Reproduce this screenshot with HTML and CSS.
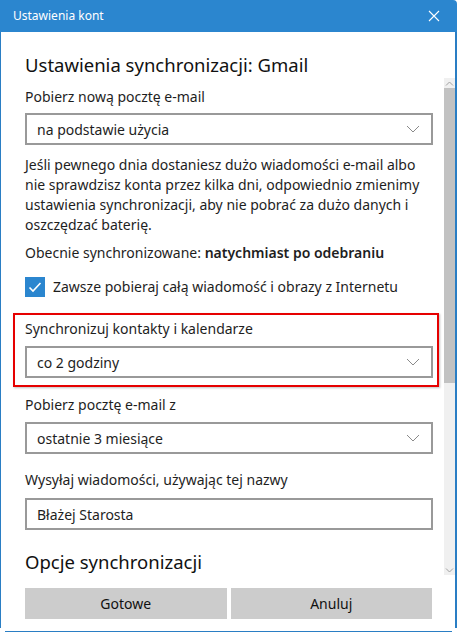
FILE: index.html
```html
<!DOCTYPE html>
<html lang="pl">
<head>
<meta charset="utf-8">
<title>Ustawienia kont</title>
<link rel="stylesheet" href="styles.css">
</head>
<body>
<div class="window">
  <div class="titlebar">
    <span class="title">Ustawienia kont</span>
    <svg class="close" width="12" height="12" viewBox="0 0 12 12"><path d="M1 1L11 11M11 1L1 11" stroke="#fff" stroke-width="1.1" fill="none"/></svg>
  </div>
  <div class="body">
    <div class="scroll">
      <h1 class="heading">Ustawienia synchronizacji: Gmail</h1>
      <div class="label">Pobierz nową pocztę e-mail</div>
      <div class="select"><span>na podstawie użycia</span><svg class="chev" width="14" height="8" viewBox="0 0 14 8"><path d="M1 1L7 7L13 1" stroke="#8a8a8a" stroke-width="1" fill="none"/></svg></div>
      <p class="desc">Jeśli pewnego dnia dostaniesz dużo wiadomości e-mail albo<br>nie sprawdzisz konta przez kilka dni, odpowiednio zmienimy<br>ustawienia synchronizacji, aby nie pobrać za dużo danych i<br>oszczędzać baterię.</p>
      <div class="current">Obecnie synchronizowane: <b>natychmiast po odebraniu</b></div>
      <div class="check-row">
        <span class="checkbox"><svg width="20" height="20" viewBox="0 0 20 20"><path d="M4.5 10.5L8 14L15.5 6" stroke="#fff" stroke-width="1.6" fill="none"/></svg></span>
        <span>Zawsze pobieraj całą wiadomość i obrazy z Internetu</span>
      </div>
      <div class="highlight">
        <div class="label">Synchronizuj kontakty i kalendarze</div>
        <div class="select"><span>co 2 godziny</span><svg class="chev" width="14" height="8" viewBox="0 0 14 8"><path d="M1 1L7 7L13 1" stroke="#8a8a8a" stroke-width="1" fill="none"/></svg></div>
      </div>
      <div class="label after-hl">Pobierz pocztę e-mail z</div>
      <div class="select"><span>ostatnie 3 miesiące</span><svg class="chev" width="14" height="8" viewBox="0 0 14 8"><path d="M1 1L7 7L13 1" stroke="#8a8a8a" stroke-width="1" fill="none"/></svg></div>
      <div class="label spaced">Wysyłaj wiadomości, używając tej nazwy</div>
      <div class="input">Błażej Starosta</div>
      <h2 class="heading sub">Opcje synchronizacji</h2>
    </div>
    <div class="scrollbar">
      <div class="arrow"><svg width="9" height="5" viewBox="0 0 9 5"><path d="M1 4.5L4.5 1L8 4.5" stroke="#a0a0a0" stroke-width="1" fill="none"/></svg></div>
      <div class="thumb"></div>
      <div class="track"></div>
      <div class="arrow"><svg width="9" height="5" viewBox="0 0 9 5"><path d="M1 0.5L4.5 4L8 0.5" stroke="#a0a0a0" stroke-width="1" fill="none"/></svg></div>
    </div>
  </div>
  <div class="footer">
    <div class="btn">Gotowe</div>
    <div class="btn">Anuluj</div>
  </div>
</div>
<div class="edge"></div>
</body>
</html>
```

FILE: styles.css
```css
* { box-sizing: border-box; }
html, body { margin: 0; padding: 0; background: #fff; }
body {
  width: 458px;
  height: 633px;
  overflow: hidden;
  font-family: "Noto Sans", "Open Sans", sans-serif;
  color: #1e1e1e;
}
.window {
  width: 457px;
  height: 628px;
  display: flex;
  flex-direction: column;
}
.titlebar {
  height: 32px;
  background: #2b86cf;
  border-top-right-radius: 4px;
  display: flex;
  align-items: center;
  justify-content: space-between;
  padding: 0 17px 0 13px;
  flex: none;
}
.title {
  color: #fff;
  font-size: 12px;
  line-height: 16px;
}
.close { display: block; }
.body {
  flex: 1;
  display: flex;
  border-left: 1px solid #2a7ec4;
  border-right: 2px solid #2a7ec4;
  min-height: 0;
}
.scroll {
  flex: 1;
  padding: 19px 11px 0 24px;
  height: 546px;
  overflow: hidden;
}
.heading {
  margin: 0;
  font-size: 18.5px;
  font-weight: normal;
  line-height: 28px;
  color: #111;
}
.label {
  font-size: 14px;
  line-height: 20px;
  margin-top: 8px;
}
.select, .input {
  height: 32px;
  margin-top: 6px;
  border: 2px solid #999;
  display: flex;
  align-items: center;
  justify-content: space-between;
  padding: 0 10px 0 10px;
  font-size: 14px;
  color: #1e1e1e;
}
.chev { display: block; margin-right: 1px; }
.desc {
  margin: 10px 0 0;
  font-size: 14px;
  line-height: 20px;
  white-space: nowrap;
}
.current {
  margin-top: 8px;
  font-size: 14px;
  line-height: 20px;
}
.current b { font-weight: 600; }
.check-row {
  margin-top: 14px;
  display: flex;
  align-items: center;
  gap: 8px;
  font-size: 14px;
  line-height: 20px;
}
.checkbox {
  width: 20px;
  height: 20px;
  background: #2b86cf;
  display: block;
  flex: none;
}
.checkbox svg { display: block; }
.highlight {
  margin: 16px -6px 0 -12px;
  border: 2px solid #e60000;
  padding: 4px 4px 7px 10px;
  box-shadow: 1px 1px 2px rgba(0,0,0,0.25);
}
.highlight .label { margin-top: 0; }
.highlight .select { margin-top: 7px; }
.after-hl { margin-top: 8px; }
.label + .select { }
.after-hl + .select { margin-top: 7px; }
.spaced { margin-top: 16px; }
.input { margin-top: 8px; }
.sub { margin-top: 18px; }
.scrollbar {
  width: 11px;
  margin-top: 46px;
  height: 497px;
  display: flex;
  flex-direction: column;
  background: #f0f0f0;
  flex: none;
}
.arrow {
  height: 10px;
  display: flex;
  align-items: center;
  justify-content: center;
  flex: none;
}
.arrow svg { display: block; }
.thumb {
  height: 295px;
  background: #c2c2c2;
  flex: none;
}
.track { flex: 1; }
.footer {
  flex: none;
  height: 50px;
  display: flex;
  gap: 4px;
  padding: 10px 23px 0 24px;
  border-left: 1px solid #2a7ec4;
  border-right: 2px solid #2a7ec4;
}
.btn {
  flex: 1;
  height: 31px;
  background: #cccccc;
  display: flex;
  align-items: center;
  justify-content: center;
  font-size: 14px;
  color: #111;
}
.edge {
  margin: 3px 0 0 5px;
  width: 447px;
  height: 1px;
  background: #2a7ec4;
}
```
